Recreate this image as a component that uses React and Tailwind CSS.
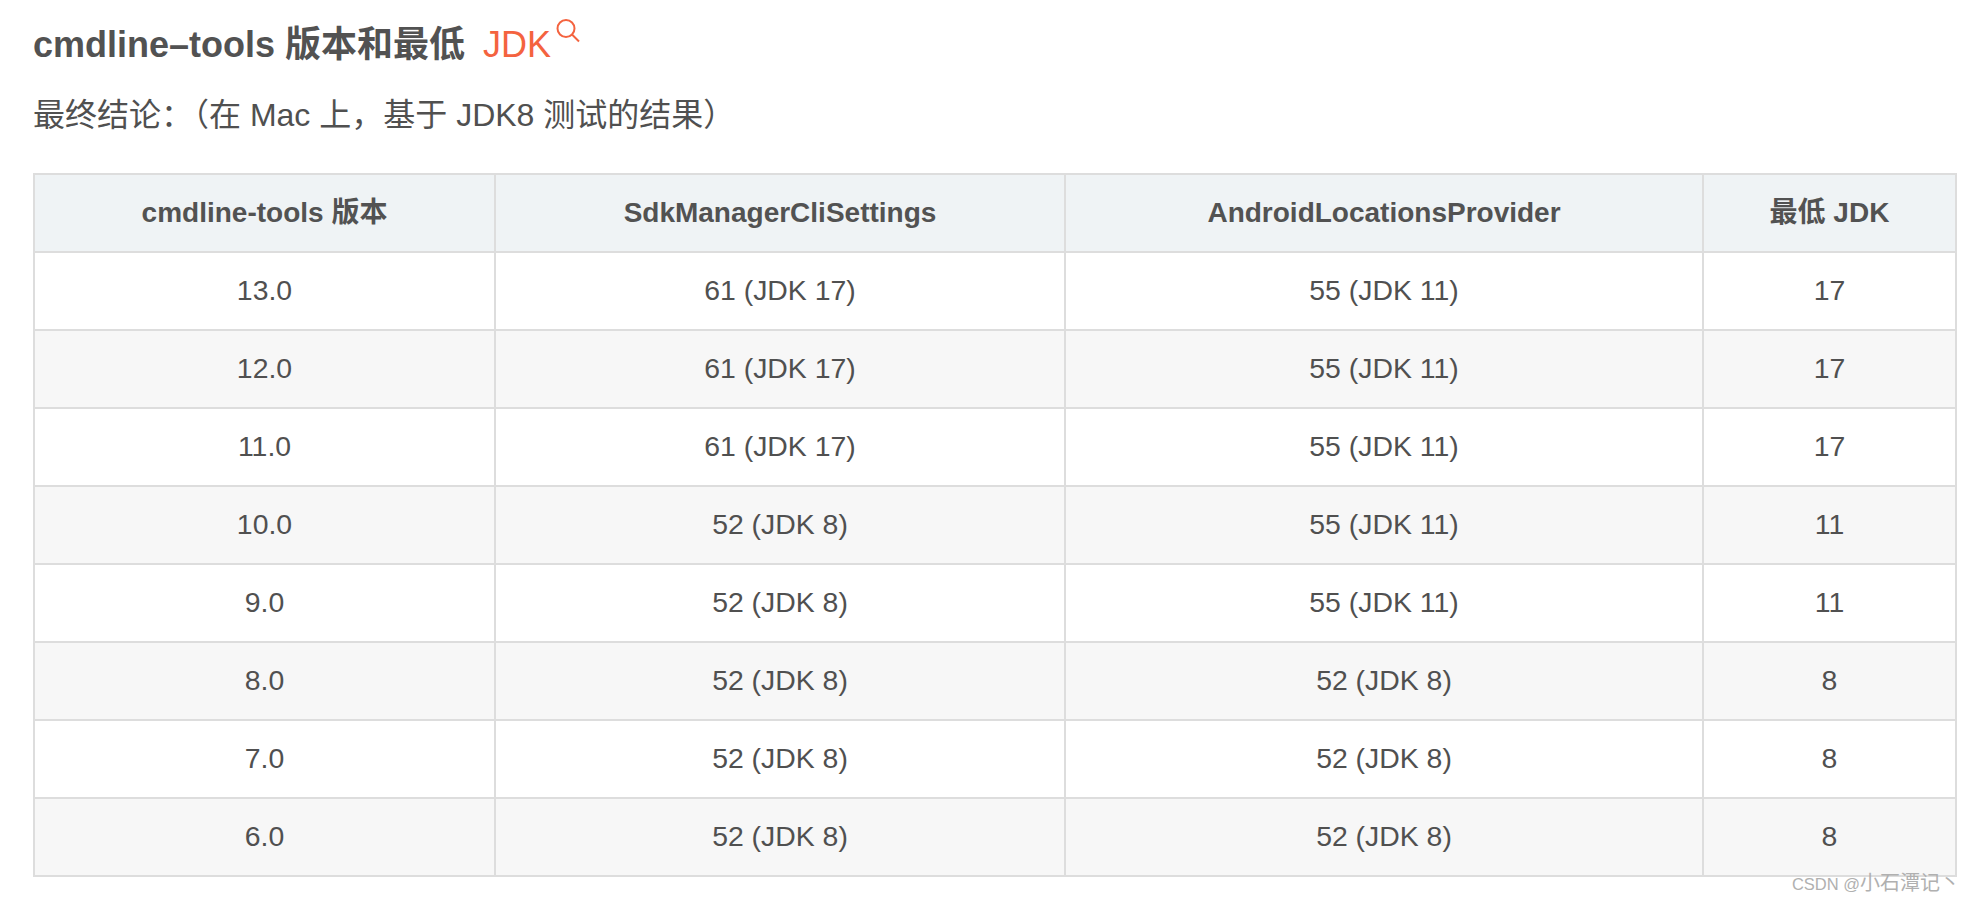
const F = { fontFamily: '"Liberation Sans","Noto Sans CJK SC",sans-serif' };
const head = ["cmdline-tools 版本", "SdkManagerCliSettings", "AndroidLocationsProvider", "最低 JDK"];
const rows = [
  ["13.0", "61 (JDK 17)", "55 (JDK 11)", "17"],
  ["12.0", "61 (JDK 17)", "55 (JDK 11)", "17"],
  ["11.0", "61 (JDK 17)", "55 (JDK 11)", "17"],
  ["10.0", "52 (JDK 8)", "55 (JDK 11)", "11"],
  ["9.0", "52 (JDK 8)", "55 (JDK 11)", "11"],
  ["8.0", "52 (JDK 8)", "52 (JDK 8)", "8"],
  ["7.0", "52 (JDK 8)", "52 (JDK 8)", "8"],
  ["6.0", "52 (JDK 8)", "52 (JDK 8)", "8"],
];
export default function App() {
  return (
    <div className="relative w-[1972px] h-[902px] overflow-hidden bg-white text-[#505050] pl-[33px] pr-[15px] pt-[19px]" style={F}>
      <h2 className="flex items-start h-[52px] text-[36px] leading-[52px] font-bold text-[#525252]">
        <span>cmdline–tools 版本和最低</span>
        <span className="ml-[18px] font-normal text-[#f4633f]">JDK</span>
        <svg className="mt-[-1px] ml-[4px]" width="26" height="26" viewBox="0 0 26 26" fill="none" stroke="#f4633f" strokeWidth="2">
          <circle cx="11" cy="10.5" r="8.5" />
          <path d="M17 16.5l7 7" />
        </svg>
      </h2>
      <p className="mt-[20px] text-[32px] leading-[48px]">{"最终结论\uFF1A\uFF08在 Mac 上\uFF0C基于 JDK8 测试的结果\uFF09"}</p>
      <table className="mt-[34px] w-[1922px] table-fixed border-collapse text-[28.4px]">
        <colgroup>
          <col className="w-[461px]" />
          <col className="w-[570px]" />
          <col className="w-[638px]" />
          <col className="w-[253px]" />
        </colgroup>
        <thead>
          <tr className="h-[78px] bg-[#eff3f5]">
            {head.map((h) => (
              <th key={h} className="border-2 border-[#dddddd] p-0 text-center text-[28px] font-bold text-[#525252]">{h}</th>
            ))}
          </tr>
        </thead>
        <tbody>
          {rows.map((r, i) => (
            <tr key={i} className={`h-[78px] ${i % 2 ? "bg-[#f7f7f7]" : "bg-white"}`}>
              {r.map((c, j) => (
                <td key={j} className="border-2 border-[#dddddd] p-0 pb-[2px] text-center">{c}</td>
              ))}
            </tr>
          ))}
        </tbody>
      </table>
      <div className="absolute right-[12px] bottom-[2px] text-[20px] leading-[32px] text-[#b0b0b0]"><span className="text-[16.5px]">CSDN @</span>小石潭记丶</div>
    </div>
  );
}
